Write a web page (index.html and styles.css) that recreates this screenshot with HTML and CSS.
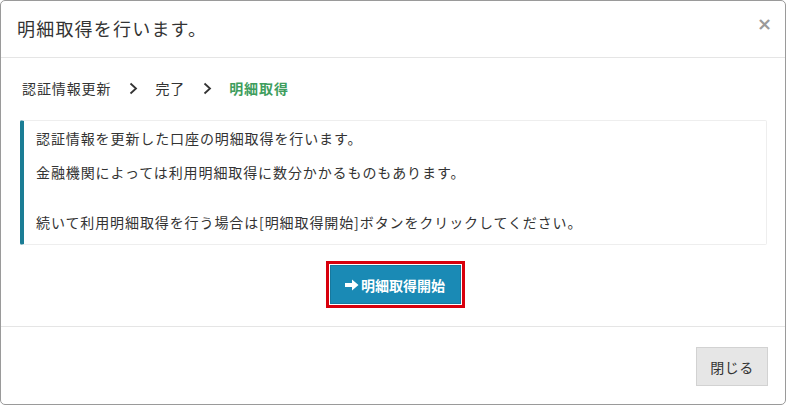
FILE: index.html
```html
<!DOCTYPE html>
<html lang="ja">
  <head>
    <meta charset="utf-8">
    <title>明細取得</title>
    <link rel="stylesheet" href="styles.css">
  </head>
  <body>

  <div class="modal">
    <div class="modal-header">
      <h4 class="modal-title">明細取得を行います。</h4>
      <span class="close">&times;</span>
    </div>

    <div class="modal-body">
      <div class="steps">
        <span>認証情報更新</span>
        <svg class="chev" width="9" height="13" viewBox="0 0 9 13"><path d="M1.5 1.5 L7 6.5 L1.5 11.5" fill="none" stroke="#333" stroke-width="1.8"/></svg>
        <span>完了</span>
        <svg class="chev" width="9" height="13" viewBox="0 0 9 13"><path d="M1.5 1.5 L7 6.5 L1.5 11.5" fill="none" stroke="#333" stroke-width="1.8"/></svg>
        <span class="current">明細取得</span>
      </div>

      <div class="callout">
        <p>認証情報を更新した口座の明細取得を行います。</p>
        <p>金融機関によっては利用明細取得に数分かかるものもあります。<br><br>続いて利用明細取得を行う場合は[明細取得開始]ボタンをクリックしてください。</p>
      </div>

      <div class="action">
        <div class="highlight">
          <button class="btn-start">
            <svg width="14" height="12" viewBox="0 0 14 12"><path d="M0 4 H7 V0.5 L13.5 6 L7 11.5 V8 H0 Z" fill="#fff"/></svg>明細取得開始
          </button>
        </div>
      </div>
    </div>

    <div class="modal-footer">
      <button class="btn-close">閉じる</button>
    </div>
  </div>

  </body>
</html>
```

FILE: styles.css
```css
html {
  height: 100%;
}
body {
  margin: 0;
  padding: 0;
  background: #ffffff;
  color: #333333;
  font-family: "Noto Sans CJK JP", "Noto Sans", sans-serif;
  font-size: 14px;
}

.modal {
  box-sizing: border-box;
  width: 786px;
  height: 405px;
  border: 1px solid #9a9a9a;
  border-radius: 5px;
  display: flex;
  flex-direction: column;
  background: #fff;
}

.modal-header {
  height: 56px;
  border-bottom: 1px solid #e5e5e5;
  display: flex;
  align-items: center;
  justify-content: space-between;
  padding: 0 13px 0 16px;
}

.modal-title {
  margin: 0;
  font-size: 18px;
  font-weight: normal;
  line-height: 24px;
  letter-spacing: 1.2px;
  padding-bottom: 2px;
}

.close {
  color: #9a9a9a;
  font-size: 18px;
  font-weight: bold;
  font-family: "DejaVu Sans", sans-serif;
  line-height: 20px;
  padding-bottom: 11px;
}

.modal-body {
  flex: 1;
  padding: 20px 18px 0 18px;
}

.steps {
  display: flex;
  align-items: center;
  height: 20px;
  line-height: 20px;
  padding-left: 3px;
  margin-bottom: 22px;
  letter-spacing: 0.9px;
}
.steps .chev {
  margin: 0 17px 0 18px;
}
.steps .current {
  color: #3f9e5e;
  font-weight: bold;
}

.callout {
  border: 1px solid #eeeeee;
  border-left: 4px solid #1b7d95;
  border-radius: 2px;
  padding: 5px 15px 9px 12px;
  margin-left: 1px;
  letter-spacing: 0.9px;
}
.callout p {
  margin: 0;
  line-height: 25px;
}
.callout p + p {
  margin-top: 9px;
}

.action {
  display: flex;
  justify-content: center;
  padding-top: 16px;
}

.highlight {
  border: 3px solid #d8000c;
  padding: 1px;
  margin-left: 4px;
}

.btn-start {
  display: flex;
  align-items: center;
  gap: 2px;
  height: 39px;
  width: 131px;
  justify-content: center;
  background: #1a8ab5;
  border: 1px solid #17789e;
  color: #fff;
  font-family: inherit;
  font-size: 14px;
  font-weight: bold;
  padding: 0;
}

.modal-footer {
  height: 78px;
  border-top: 1px solid #e5e5e5;
  display: flex;
  justify-content: flex-end;
  align-items: flex-start;
  padding: 20px 17px 0 0;
  box-sizing: border-box;
}

.btn-close {
  width: 72px;
  height: 39px;
  background: #e6e6e6;
  border: 1px solid #d2d2d2;
  color: #333;
  font-family: inherit;
  font-size: 14px;
  letter-spacing: 0.5px;
  padding: 0;
}
```
